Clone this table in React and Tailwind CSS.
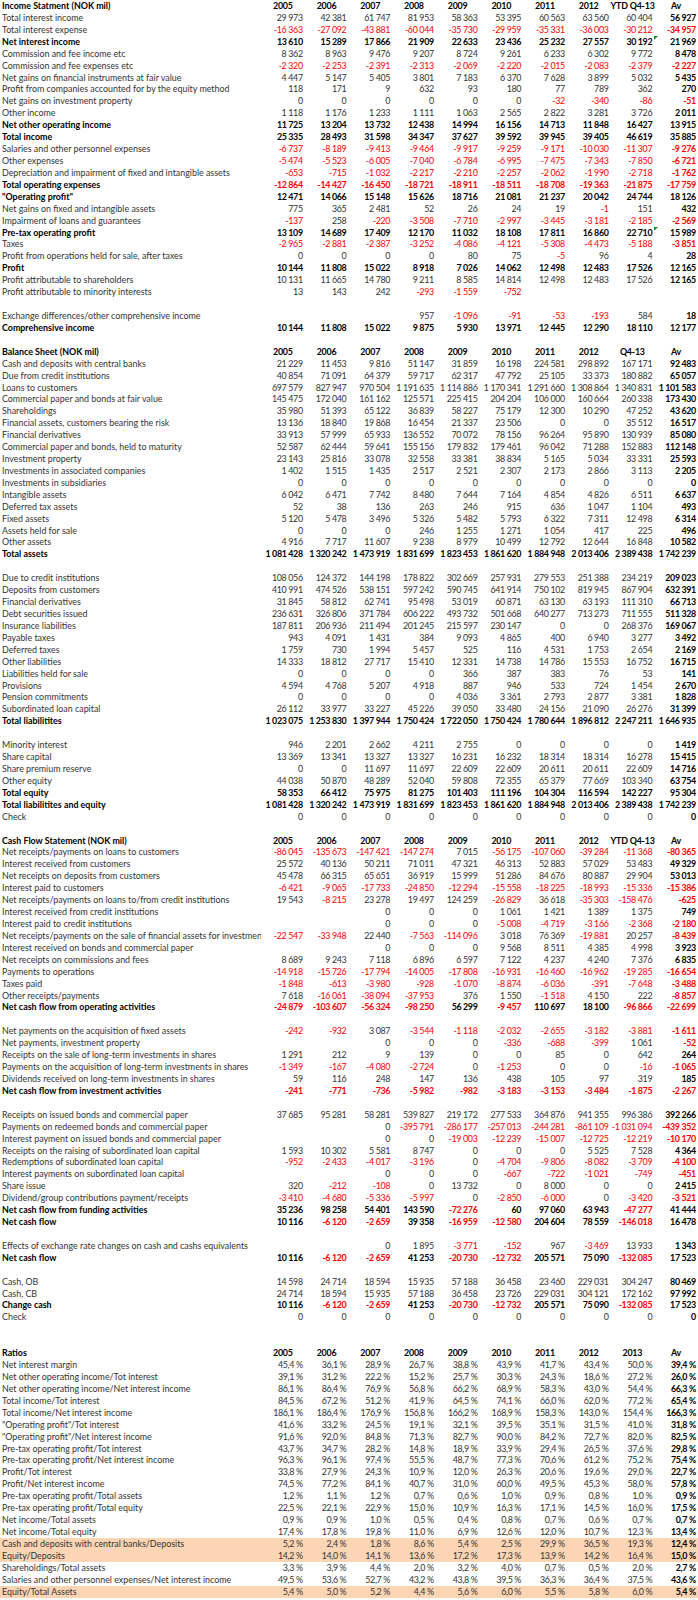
import React from "react";

const Y1 = ["2005", "2006", "2007", "2008", "2009", "2010", "2011", "2012", "YTD Q4-13", "Av"];
const Y2 = ["2005", "2006", "2007", "2008", "2009", "2010", "2011", "2012", "Q4-13", "Av"];
const Y3 = ["2005", "2006", "2007", "2008", "2009", "2010", "2011", "2012", "2013", "Av"];
const ZERO = "0|0|0|0|0|0|0|0|0|0";

// [label, values ("|" separated) or header years, flags]
// flags: h = header, b = bold, o = orange band, g = green error marker on Av cell, p = percent
const rows = [
  ["Income Statment (NOK mil)", Y1, "h"],
  ["Total interest income", "29 973|42 381|61 747|81 953|58 363|53 395|60 563|63 560|60 404|56 927"],
  ["Total interest expense", "-16 363|-27 092|-43 881|-60 044|-35 730|-29 959|-35 331|-36 003|-30 212|-34 957"],
  ["Net interest income", "13 610|15 289|17 866|21 909|22 633|23 436|25 232|27 557|30 192|21 969", "bg"],
  ["Commission and fee income etc", "8 362|8 963|9 476|9 207|8 724|9 261|6 233|6 302|9 772|8 478"],
  ["Commission and fee expenses etc", "-2 320|-2 253|-2 391|-2 313|-2 069|-2 220|-2 015|-2 083|-2 379|-2 227"],
  ["Net gains on financial instruments at fair value", "4 447|5 147|5 405|3 801|7 183|6 370|7 628|3 899|5 032|5 435"],
  ["Profit from companies accounted for by the equity method", "118|171|9|632|93|180|77|789|362|270"],
  ["Net gains on investment property", "0|0|0|0|0|0|-32|-340|-86|-51"],
  ["Other income", "1 118|1 176|1 233|1 111|1 063|2 565|2 822|3 281|3 726|2 011"],
  ["Net other operating income", "11 725|13 204|13 732|12 438|14 994|16 156|14 713|11 848|16 427|13 915", "b"],
  ["Total income", "25 335|28 493|31 598|34 347|37 627|39 592|39 945|39 405|46 619|35 885", "b"],
  ["Salaries and other personnel expenses", "-6 737|-8 189|-9 413|-9 464|-9 917|-9 259|-9 171|-10 030|-11 307|-9 276"],
  ["Other expenses", "-5 474|-5 523|-6 005|-7 040|-6 784|-6 995|-7 475|-7 343|-7 850|-6 721"],
  ["Depreciation and impairment of fixed and intangible assets", "-653|-715|-1 032|-2 217|-2 210|-2 257|-2 062|-1 990|-2 718|-1 762"],
  ["Total operating expenses", "-12 864|-14 427|-16 450|-18 721|-18 911|-18 511|-18 708|-19 363|-21 875|-17 759", "b"],
  ["\"Operating profit\"", "12 471|14 066|15 148|15 626|18 716|21 081|21 237|20 042|24 744|18 126", "b"],
  ["Net gains on fixed and intangible assets", "775|365|2 481|52|26|24|19|-1|151|432"],
  ["Impairment of loans and guarantees", "-137|258|-220|-3 508|-7 710|-2 997|-3 445|-3 181|-2 185|-2 569"],
  ["Pre-tax operating profit", "13 109|14 689|17 409|12 170|11 032|18 108|17 811|16 860|22 710|15 989", "bg"],
  ["Taxes", "-2 965|-2 881|-2 387|-3 252|-4 086|-4 121|-5 308|-4 473|-5 188|-3 851"],
  ["Profit from operations held for sale, after taxes", "0|0|0|0|80|75|-5|96|4|28"],
  ["Profit", "10 144|11 808|15 022|8 918|7 026|14 062|12 498|12 483|17 526|12 165", "b"],
  ["Profit attributable to shareholders", "10 131|11 665|14 780|9 211|8 585|14 814|12 498|12 483|17 526|12 165"],
  ["Profit attributable to minority interests", "13|143|242|-293|-1 559|-752||||"],
  null,
  ["Exchange differences/other comprehensive income", "|||957|-1 096|-91|-53|-193|584|18"],
  ["Comprehensive income", "10 144|11 808|15 022|9 875|5 930|13 971|12 445|12 290|18 110|12 177", "b"],
  null,
  ["Balance Sheet (NOK mil)", Y2, "h"],
  ["Cash and deposits with central banks", "21 229|11 453|9 816|51 147|31 859|16 198|224 581|298 892|167 171|92 483"],
  ["Due from credit institutions", "40 854|71 091|64 379|59 717|62 317|47 792|25 105|33 373|180 882|65 057"],
  ["Loans to customers", "697 579|827 947|970 504|1 191 635|1 114 886|1 170 341|1 291 660|1 308 864|1 340 831|1 101 583"],
  ["Commercial paper and bonds at fair value", "145 475|172 040|161 162|125 571|225 415|204 204|106 000|160 664|260 338|173 430"],
  ["Shareholdings", "35 980|51 393|65 122|36 839|58 227|75 179|12 300|10 290|47 252|43 620"],
  ["Financial assets, customers bearing the risk", "13 136|18 840|19 868|16 454|21 337|23 506|0|0|35 512|16 517"],
  ["Financial derivatives", "33 913|57 999|65 933|136 552|70 072|78 156|96 264|95 890|130 939|85 080"],
  ["Commercial paper and bonds, held to maturity", "52 587|62 444|59 641|155 156|179 832|179 461|96 042|71 288|152 883|112 148"],
  ["Investment property", "23 143|25 816|33 078|32 558|33 381|38 834|5 165|5 034|33 331|25 593"],
  ["Investments in associated companies", "1 402|1 515|1 435|2 517|2 521|2 307|2 173|2 866|3 113|2 205"],
  ["Investments in subsidiaries", ZERO],
  ["Intangible assets", "6 042|6 471|7 742|8 480|7 644|7 164|4 854|4 826|6 511|6 637"],
  ["Deferred tax assets", "52|38|136|263|246|915|636|1 047|1 104|493"],
  ["Fixed assets", "5 120|5 478|3 496|5 326|5 482|5 793|6 322|7 311|12 498|6 314"],
  ["Assets held for sale", "0|0|0|246|1 255|1 271|1 054|417|225|496"],
  ["Other assets", "4 916|7 717|11 607|9 238|8 979|10 499|12 792|12 644|16 848|10 582"],
  ["Total assets", "1 081 428|1 320 242|1 473 919|1 831 699|1 823 453|1 861 620|1 884 948|2 013 406|2 389 438|1 742 239", "b"],
  null,
  ["Due to credit institutions", "108 056|124 372|144 198|178 822|302 669|257 931|279 553|251 388|234 219|209 023"],
  ["Deposits from customers", "410 991|474 526|538 151|597 242|590 745|641 914|750 102|819 945|867 904|632 391"],
  ["Financial derivatives", "31 845|58 812|62 741|95 498|53 019|60 871|63 130|63 193|111 310|66 713"],
  ["Debt securities issued", "236 631|326 806|371 784|606 222|493 732|501 668|640 277|713 273|711 555|511 328"],
  ["Insurance liabilities", "187 811|206 936|211 494|201 245|215 597|230 147|0|0|268 376|169 067"],
  ["Payable taxes", "943|4 091|1 431|384|9 093|4 865|400|6 940|3 277|3 492"],
  ["Deferred taxes", "1 759|730|1 994|5 457|525|116|4 531|1 753|2 654|2 169"],
  ["Other liabilities", "14 333|18 812|27 717|15 410|12 331|14 738|14 786|15 553|16 752|16 715"],
  ["Liabilities held for sale", "0|0|0|0|366|387|383|76|53|141"],
  ["Provisions", "4 594|4 768|5 207|4 918|887|946|533|724|1 454|2 670"],
  ["Pension commitments", "0|0|0|0|4 036|3 361|2 793|2 877|3 381|1 828"],
  ["Subordinated loan capital", "26 112|33 977|33 227|45 226|39 050|33 480|24 156|21 090|26 276|31 399"],
  ["Total liabilitites", "1 023 075|1 253 830|1 397 944|1 750 424|1 722 050|1 750 424|1 780 644|1 896 812|2 247 211|1 646 935", "b"],
  null,
  ["Minority interest", "946|2 201|2 662|4 211|2 755|0|0|0|0|1 419"],
  ["Share capital", "13 369|13 341|13 327|13 327|16 231|16 232|18 314|18 314|16 278|15 415"],
  ["Share premium reserve", "0|0|11 697|11 697|22 609|22 609|20 611|20 611|22 609|14 716"],
  ["Other equity", "44 038|50 870|48 289|52 040|59 808|72 355|65 379|77 669|103 340|63 754"],
  ["Total equity", "58 353|66 412|75 975|81 275|101 403|111 196|104 304|116 594|142 227|95 304", "b"],
  ["Total liabilitites and equity", "1 081 428|1 320 242|1 473 919|1 831 699|1 823 453|1 861 620|1 884 948|2 013 406|2 389 438|1 742 239", "b"],
  ["Check", ZERO],
  null,
  ["Cash Flow Statement (NOK mil)", Y1, "h"],
  ["Net receipts/payments on loans to customers", "-86 045|-135 673|-147 421|-147 274|7 015|-56 175|-107 060|-39 284|-11 368|-80 365"],
  ["Interest received from customers", "25 572|40 136|50 211|71 011|47 321|46 313|52 883|57 029|53 483|49 329"],
  ["Net receipts on deposits from customers", "45 478|66 315|65 651|36 919|15 999|51 286|84 676|80 887|29 904|53 013"],
  ["Interest paid to customers", "-6 421|-9 065|-17 733|-24 850|-12 294|-15 558|-18 225|-18 993|-15 336|-15 386"],
  ["Net receipts/payments on loans to/from credit institutions", "19 543|-8 215|23 278|19 497|124 259|-26 829|36 618|-35 303|-158 476|-625"],
  ["Interest received from credit institutions", "||0|0|0|1 061|1 421|1 389|1 375|749"],
  ["Interest paid to credit institutions", "||0|0|0|-5 008|-4 719|-3 166|-2 368|-2 180"],
  ["Net receipts/payments on the sale of financial assets for investment activities", "-22 547|-33 948|22 440|-7 563|-114 096|3 018|76 369|-19 881|20 257|-8 439"],
  ["Interest received on bonds and commercial paper", "||0|0|0|9 568|8 511|4 385|4 998|3 923"],
  ["Net receipts on commissions and fees", "8 689|9 243|7 118|6 896|6 597|7 122|4 237|4 240|7 376|6 835"],
  ["Payments to operations", "-14 918|-15 726|-17 794|-14 005|-17 808|-16 931|-16 460|-16 962|-19 285|-16 654"],
  ["Taxes paid", "-1 848|-613|-3 980|-928|-1 070|-8 874|-6 036|-391|-7 648|-3 488"],
  ["Other receipts/payments", "7 618|-16 061|-38 094|-37 953|376|1 550|-1 518|4 150|222|-8 857"],
  ["Net cash flow from operating activities", "-24 879|-103 607|-56 324|-98 250|56 299|-9 457|110 697|18 100|-96 866|-22 699", "b"],
  null,
  ["Net payments on the acquisition of fixed assets", "-242|-932|3 087|-3 544|-1 118|-2 032|-2 655|-3 182|-3 881|-1 611"],
  ["Net payments, investment property", "||0|0|0|-336|-688|-399|1 061|-52"],
  ["Receipts on the sale of long-term investments in shares", "1 291|212|9|139|0|0|85|0|642|264"],
  ["Payments on the acquisition of long-term investments in shares", "-1 349|-167|-4 080|-2 724|0|-1 253|0|0|-16|-1 065"],
  ["Dividends received on long-term investments in shares", "59|116|248|147|136|438|105|97|319|185"],
  ["Net cash flow from investment activities", "-241|-771|-736|-5 982|-982|-3 183|-3 153|-3 484|-1 875|-2 267", "b"],
  null,
  ["Receipts on issued bonds and commercial paper", "37 685|95 281|58 281|539 827|219 172|277 533|364 876|941 355|996 386|392 266"],
  ["Payments on redeemed bonds and commercial paper", "||0|-395 791|-286 177|-257 013|-244 281|-861 109|-1 031 094|-439 352"],
  ["Interest payment on issued bonds and commercial paper", "||0|0|-19 003|-12 239|-15 007|-12 725|-12 219|-10 170"],
  ["Receipts on the raising of subordinated loan capital", "1 593|10 302|5 581|8 747|0|0|0|5 525|7 528|4 364"],
  ["Redemptions of subordinated loan capital", "-952|-2 433|-4 017|-3 196|0|-4 704|-9 806|-8 082|-3 709|-4 100"],
  ["Interest payments on subordinated loan capital", "||0|0|0|-667|-722|-1 021|-749|-451"],
  ["Share issue", "320|-212|-108|0|13 732|0|8 000|0|0|2 415"],
  ["Dividend/group contributions payment/receipts", "-3 410|-4 680|-5 336|-5 997|0|-2 850|-6 000|0|-3 420|-3 521"],
  ["Net cash flow from funding activities", "35 236|98 258|54 401|143 590|-72 276|60|97 060|63 943|-47 277|41 444", "b"],
  ["Net cash flow", "10 116|-6 120|-2 659|39 358|-16 959|-12 580|204 604|78 559|-146 018|16 478", "b"],
  null,
  ["Effects of exchange rate changes on cash and cashs equivalents", "||0|1 895|-3 771|-152|967|-3 469|13 933|1 343"],
  ["Net cash flow", "10 116|-6 120|-2 659|41 253|-20 730|-12 732|205 571|75 090|-132 085|17 523", "b"],
  null,
  ["Cash, OB", "14 598|24 714|18 594|15 935|57 188|36 458|23 460|229 031|304 247|80 469"],
  ["Cash, CB", "24 714|18 594|15 935|57 188|36 458|23 726|229 031|304 121|172 162|97 992"],
  ["Change cash", "10 116|-6 120|-2 659|41 253|-20 730|-12 732|205 571|75 090|-132 085|17 523", "b"],
  ["Check", ZERO],
  null,
  null,
  ["Ratios", Y3, "h"],
  ["Net interest margin", "45,4|36,1|28,9|26,7|38,8|43,9|41,7|43,4|50,0|39,4", "p"],
  ["Net other operating income/Tot interest", "39,1|31,2|22,2|15,2|25,7|30,3|24,3|18,6|27,2|26,0", "p"],
  ["Net other operating income/Net interest income", "86,1|86,4|76,9|56,8|66,2|68,9|58,3|43,0|54,4|66,3", "p"],
  ["Total income/Tot interest", "84,5|67,2|51,2|41,9|64,5|74,1|66,0|62,0|77,2|65,4", "p"],
  ["Total income/Net interest income", "186,1|186,4|176,9|156,8|166,2|168,9|158,3|143,0|154,4|166,3", "p"],
  ["\"Operating profit\"/Tot interest", "41,6|33,2|24,5|19,1|32,1|39,5|35,1|31,5|41,0|31,8", "p"],
  ["\"Operating profit\"/Net interest income", "91,6|92,0|84,8|71,3|82,7|90,0|84,2|72,7|82,0|82,5", "p"],
  ["Pre-tax operating profit/Tot interest", "43,7|34,7|28,2|14,8|18,9|33,9|29,4|26,5|37,6|29,8", "p"],
  ["Pre-tax operating profit/Net interest income", "96,3|96,1|97,4|55,5|48,7|77,3|70,6|61,2|75,2|75,4", "p"],
  ["Profit/Tot interest", "33,8|27,9|24,3|10,9|12,0|26,3|20,6|19,6|29,0|22,7", "p"],
  ["Profit/Net interest income", "74,5|77,2|84,1|40,7|31,0|60,0|49,5|45,3|58,0|57,8", "p"],
  ["Pre-tax operating profit/Total assets", "1,2|1,1|1,2|0,7|0,6|1,0|0,9|0,8|1,0|0,9", "p"],
  ["Pre-tax operating profit/Total equity", "22,5|22,1|22,9|15,0|10,9|16,3|17,1|14,5|16,0|17,5", "p"],
  ["Net income/Total assets", "0,9|0,9|1,0|0,5|0,4|0,8|0,7|0,6|0,7|0,7", "p"],
  ["Net income/Total equity", "17,4|17,8|19,8|11,0|6,9|12,6|12,0|10,7|12,3|13,4", "p"],
  ["Cash and deposits with central banks/Deposits", "5,2|2,4|1,8|8,6|5,4|2,5|29,9|36,5|19,3|12,4", "po"],
  ["Equity/Deposits", "14,2|14,0|14,1|13,6|17,2|17,3|13,9|14,2|16,4|15,0", "po"],
  ["Shareholdings/Total assets", "3,3|3,9|4,4|2,0|3,2|4,0|0,7|0,5|2,0|2,7", "p"],
  ["Salaries and other personnel expenses/Net interest income", "49,5|53,6|52,7|43,2|43,8|39,5|36,3|36,4|37,5|43,6", "p"],
  ["Equity/Total Assets", "5,4|5,0|5,2|4,4|5,6|6,0|5,5|5,8|6,0|5,4", "po"],
];

const nb = (s) => s.replace(/ /g, "\u00a0");

const Row = ({ r }) => {
  if (!r) return <div className="h-[11.93px]" />;
  const [label, vals, f = ""] = r;
  const header = f.includes("h");
  const bold = header || f.includes("b");
  const cells = header ? vals : vals.split("|");

  return (
    <div
      className={`grid h-[11.93px] grid-cols-[261px_repeat(10,43.7px)] leading-[11.93px] ${
        f.includes("o") ? "bg-[#FCD5B4]" : ""
      }`}
    >
      <div
        className={`overflow-hidden whitespace-nowrap pl-[2px] ${
          bold ? "font-bold text-black" : "text-[#333333]"
        }`}
      >
        {label}
      </div>
      {cells.map((v, i) => {
        if (header) {
          return (
            <div key={i} className="whitespace-nowrap text-center font-bold tracking-[-0.2px] text-black">
              {v}
            </div>
          );
        }
        const neg = v.startsWith("-");
        const strong = bold || i === 9;
        return (
          <div
            key={i}
            className={`relative whitespace-nowrap pr-[2px] text-right tracking-[-0.35px] ${strong ? "font-bold" : ""} ${
              neg ? "text-[#ff0000]" : strong ? "text-black" : "text-[#333333]"
            }`}
          >
            {i === 9 && f.includes("g") && (
              <span className="absolute left-0 top-0 h-0 w-0 border-r-[4px] border-t-[4px] border-r-transparent border-t-[#1e8e1e]" />
            )}
            {v === "" ? "" : nb(v) + (f.includes("p") ? "\u00a0%" : "")}
          </div>
        );
      })}
    </div>
  );
};

export default function App() {
  return (
    <div className="w-[698px] bg-white font-['Lato','Open_Sans',sans-serif] text-[8.9px]">
      {rows.map((r, i) => (
        <Row key={i} r={r} />
      ))}
    </div>
  );
}
